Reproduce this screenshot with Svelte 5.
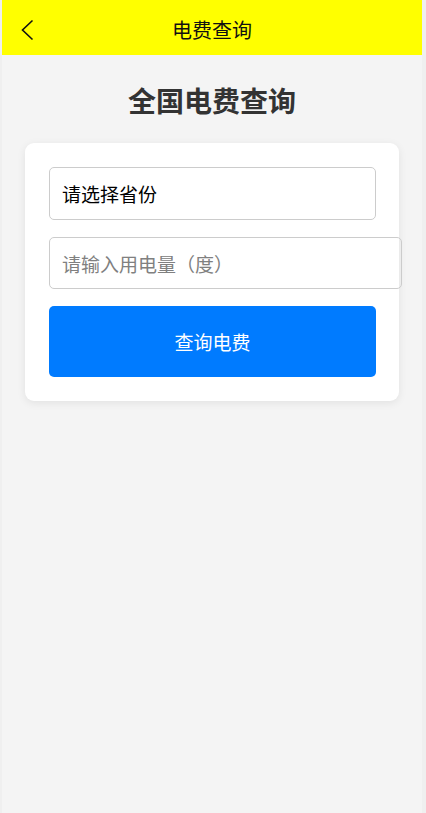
<script>
  let province = $state('');
  let usage = $state('');
  const provinces = ['北京', '上海', '广东', '江苏', '浙江', '四川'];
</script>

<div class="page">
  <header>
    <button class="back" type="button" aria-label="返回">
      <svg viewBox="0 0 14 22" width="14" height="22" aria-hidden="true">
        <path d="M12.5 1.5 L2.5 11 L12.5 20.5" />
      </svg>
    </button>
    <span class="title">电费查询</span>
  </header>
  <main>
    <h1>全国电费查询</h1>
    <form class="card" onsubmit={(e) => e.preventDefault()}>
      <select bind:value={province} aria-label="省份">
        <option value="">请选择省份</option>
        {#each provinces as name}
          <option value={name}>{name}</option>
        {/each}
      </select>
      <input type="text" inputmode="decimal" bind:value={usage} placeholder="请输入用电量（度）" aria-label="用电量（度）" />
      <button class="submit" type="submit">查询电费</button>
    </form>
  </main>
</div>

<style>
  :global(body) {
    margin: 0;
    background: #efefef;
  }

  .page {
    box-sizing: border-box;
    min-height: 100vh;
    margin: 0 4px 0 2px;
    background: #f4f4f4;
    font-family: "Noto Sans CJK SC", sans-serif;
    color: #333;
  }

  header {
    display: grid;
    grid-template-columns: 48px 1fr 48px;
    align-items: center;
    height: 55px;
    padding-top: 5px;
    box-sizing: border-box;
    background: #ff0;
  }

  .title {
    font-size: 20px;
    line-height: 28px;
    text-align: center;
    color: #111;
  }

  .back {
    display: flex;
    align-items: center;
    height: 48px;
    padding: 0 0 0 18px;
    border: 0;
    background: none;
    cursor: pointer;
  }

  .back path {
    fill: none;
    stroke: #111;
    stroke-width: 1.6;
  }

  main {
    padding: 23px;
  }

  h1 {
    margin: 0 0 21px;
    font-size: 28px;
    line-height: 44px;
    font-weight: 700;
    text-align: center;
  }

  .card {
    display: flex;
    flex-direction: column;
    align-items: flex-start;
    gap: 17px;
    padding: 24px 23px 24px 24px;
    border-radius: 9px;
    background: #fff;
    box-shadow: 0 2px 9px rgba(0, 0, 0, 0.08);
  }

  select,
  input,
  .submit {
    margin: 0;
    border-radius: 5px;
    font-family: inherit;
    font-size: 19px;
    line-height: 28px;
  }

  select,
  input {
    width: 100%;
    padding: 0 12px;
    border: 1px solid #ccc;
    background: transparent;
    color: #000;
  }

  select {
    box-sizing: border-box;
    height: 53px;
    appearance: none;
  }

  input {
    box-sizing: content-box;
    height: 50px;
  }

  input::placeholder {
    color: #808080;
    opacity: 1;
  }

  .submit {
    width: 100%;
    height: 71px;
    padding: 0;
    border: 0;
    background: #007bff;
    color: #fff;
    cursor: pointer;
  }
</style>
